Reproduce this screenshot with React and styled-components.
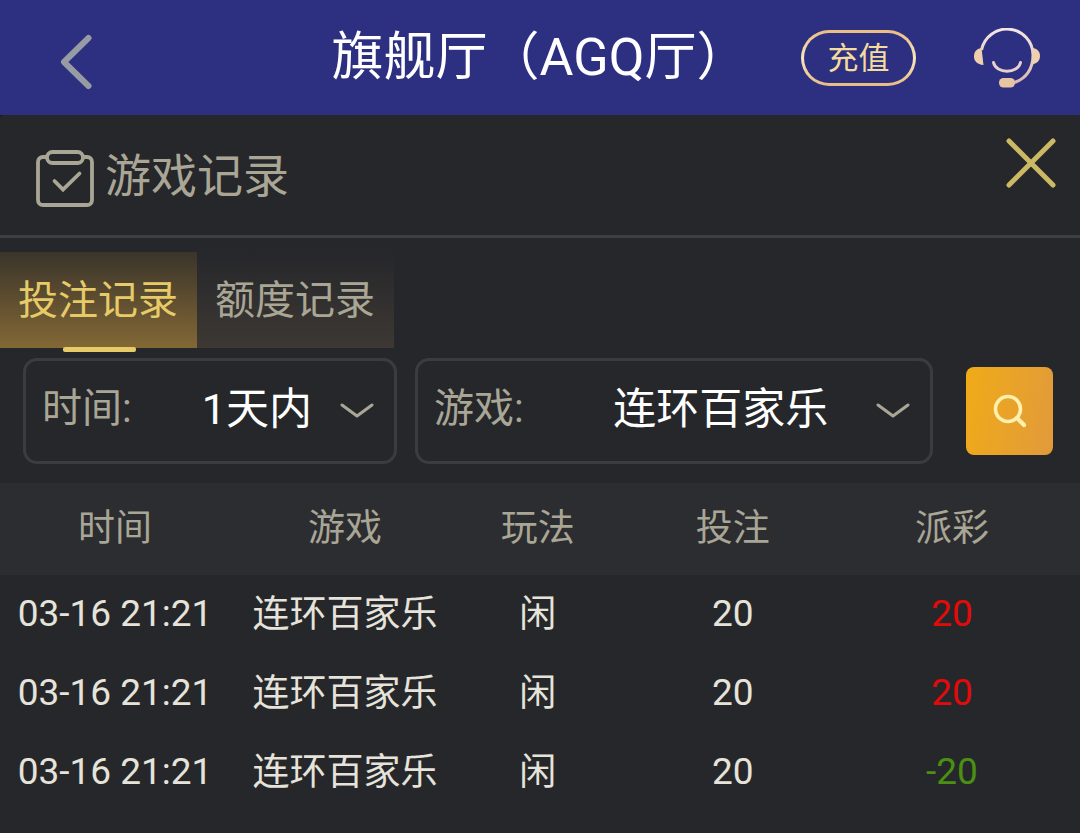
import React, { useState } from 'react';
import styled, { createGlobalStyle, css } from 'styled-components';

const records = [
    { id: 1, time: "03-16 21:21", game: "连环百家乐", play: "闲", bet: 20, payout: 20 },
    { id: 2, time: "03-16 21:21", game: "连环百家乐", play: "闲", bet: 20, payout: 20 },
    { id: 3, time: "03-16 21:21", game: "连环百家乐", play: "闲", bet: 20, payout: -20 },
];

const tabs = [
    { name: "bets", label: "投注记录" },
    { name: "quota", label: "额度记录" },
];

function BackIcon(){
    return(
        <svg width="34" height="56" viewBox="0 0 34 56" fill="none" aria-hidden="true">
            <path d="M28.500 4 L4 28 L28.500 52" stroke="#979ba4" strokeWidth="6" strokeLinecap="round" strokeLinejoin="round" />
        </svg>
    );
}

function ServiceIcon(){
    return(
        <svg width="66" height="60" viewBox="0 0 66 60" fill="none" aria-hidden="true">
            <defs>
                <linearGradient id="headset" x1="0" y1="0" x2="0" y2="1">
                    <stop offset="0" stopColor="#f3e6e2" />
                    <stop offset="1" stopColor="#d9b9b4" />
                </linearGradient>
            </defs>
            <path d="M7.500 22 A26 26 0 0 1 59 27 C59 41 52 51 40 54.500" stroke="url(#headset)" strokeWidth="3" />
            <path d="M7.500 20 C2 21 0 24 0 28.500 C0 33 3 36.500 9.500 37 Z" fill="#eecfae" />
            <path d="M59 20 C64 21 66 24 66 28 C66 32 63.500 35.500 58 36.500 Z" fill="#eecfae" />
            <path d="M19.500 34.500 C22 46 44 46 46.500 34.500" stroke="#e6d0d0" strokeWidth="3" strokeLinecap="round" />
            <rect x="25" y="50" width="16" height="9.500" rx="4.500" fill="#e8c5a2" />
        </svg>
    );
}

function ClipboardIcon(){
    return(
        <svg width="58" height="58" viewBox="0 0 58 58" fill="none" stroke="#a9a695" strokeWidth="3.800" aria-hidden="true">
            <path d="M10 7 H7 C4 7 2 9 2 12 V50 C2 53 4 55 7 55 H51 C54 55 56 53 56 50 V12 C56 9 54 7 51 7 H48" />
            <rect x="11" y="2" width="36" height="11" rx="5.500" />
            <path d="M18.500 31 L27 39.500 L43.500 23.500" strokeLinecap="round" />
        </svg>
    );
}

function CloseIcon(){
    return(
        <svg width="50" height="50" viewBox="0 0 50 50" aria-hidden="true">
            <path d="M3 3 L47 47 M47 3 L3 47" stroke="#ccb964" strokeWidth="5" strokeLinecap="round" />
        </svg>
    );
}

function SearchIcon(){
    return(
        <svg width="34" height="34" viewBox="0 0 34 34" fill="none" stroke="#fff0ae" aria-hidden="true">
            <circle cx="15" cy="15" r="12.500" strokeWidth="3.600" />
            <path d="M24 24 L31 31" strokeWidth="4.200" strokeLinecap="round" />
        </svg>
    );
}

function Filter({ id, label, options }){
    return(
        <FilterBox>
            <FilterLabel htmlFor={id}>{label}:</FilterLabel>
            <FilterSelect id={id}>
                {options.map((option) => <option key={option}>{option}</option>)}
            </FilterSelect>
            <Chevron width="34" height="18" viewBox="0 0 34 18" aria-hidden="true">
                <path d="M2 3 L17 14 L32 3" fill="none" stroke="#aaa797" strokeWidth="3" strokeLinecap="round" strokeLinejoin="round" />
            </Chevron>
        </FilterBox>
    );
}

export default function App(){
    const [activeTab, setActiveTab] = useState("bets");
    const tabClickHandler = (event) => {
        setActiveTab(event.target.name);
    };

    return(
        <Page>
            <GlobalStyle />
            <Header>
                <BackButton aria-label="返回"><BackIcon /></BackButton>
                <Title>旗舰厅（AGQ厅）</Title>
                <HeaderActions>
                    <RechargeButton>充值</RechargeButton>
                    <IconButton aria-label="客服"><ServiceIcon /></IconButton>
                </HeaderActions>
            </Header>
            <Panel>
                <PanelHead>
                    <PanelBrand>
                        <ClipboardIcon />
                        <PanelTitle>游戏记录</PanelTitle>
                    </PanelBrand>
                    <IconButton aria-label="关闭"><CloseIcon /></IconButton>
                </PanelHead>
                <Tabs>
                    {tabs.map((tab) => (
                        <TabButton key={tab.name} name={tab.name} $active={tab.name === activeTab} onClick={tabClickHandler}>{tab.label}</TabButton>
                    ))}
                </Tabs>
                <Filters>
                    <Filter id="time" label="时间" options={["1天内"]} />
                    <Filter id="game" label="游戏" options={["连环百家乐"]} />
                    <SearchButton aria-label="搜索"><SearchIcon /></SearchButton>
                </Filters>
                <Table>
                    <thead>
                        <tr>
                            <HeadCell $width="21.3%">时间</HeadCell>
                            <HeadCell $width="21.3%">游戏</HeadCell>
                            <HeadCell $width="14.4%">玩法</HeadCell>
                            <HeadCell $width="21.7%">投注</HeadCell>
                            <HeadCell>派彩</HeadCell>
                        </tr>
                    </thead>
                    <tbody>
                        {records.map((record) => (
                            <tr key={record.id}>
                                <Cell>{record.time}</Cell>
                                <NameCell>{record.game}</NameCell>
                                <NameCell>{record.play}</NameCell>
                                <Cell>{record.bet}</Cell>
                                <Payout $loss={record.payout < 0}>{record.payout}</Payout>
                            </tr>
                        ))}
                    </tbody>
                </Table>
            </Panel>
        </Page>
    );
}

const GlobalStyle = createGlobalStyle`
    * {
        box-sizing: border-box;
    }
    body {
        margin: 0;
        background-color: #26272b;
    }
    body, button, select {
        font-family: Roboto, "Noto Sans CJK SC", sans-serif;
    }
    button {
        padding: 0;
        border: none;
        background: none;
        cursor: pointer;
    }
    svg {
        display: block;
        flex-shrink: 0;
    }
`;

const Page = styled.div`
    display: flex;
    flex-direction: column;
    min-height: 100vh;
    background-color: #1a1a20;
`;

const Header = styled.header`
    display: grid;
    grid-template-columns: 1fr auto 1fr;
    align-items: center;
    height: 115px;
    padding: 0 40px 0 60px;
    background-color: #2d2f80;
`;

const IconButton = styled.button`
    display: flex;
`;

const BackButton = styled(IconButton)`
    justify-self: start;
    padding-top: 8px;
`;

const Title = styled.h1`
    margin: 0 0 0 -20px;
    font-size: 52px;
    font-weight: 400;
    line-height: 60px;
    white-space: nowrap;
    color: white;
`;

const HeaderActions = styled.div`
    display: flex;
    justify-content: flex-end;
    align-items: center;
    gap: 58px;
`;

const RechargeButton = styled.button`
    width: 115px;
    height: 56px;
    padding-bottom: 4px;
    border: 3px solid transparent;
    border-radius: 28px;
    background:
        linear-gradient(#2d2f80, #2d2f80) padding-box,
        linear-gradient(#eabb82, #f7e6c0 50%, #eabb82) border-box;
    font-size: 31px;
    color: #f5dc9c;
`;

const Panel = styled.main`
    flex: 1;
    border-top-left-radius: 4px;
    background-color: #26272b;
`;

const PanelHead = styled.div`
    display: flex;
    justify-content: space-between;
    align-items: flex-start;
    height: 123px;
    padding: 23px 24px 0 36px;
    border-bottom: 3px solid #3e3f42;
`;

const PanelBrand = styled.div`
    display: flex;
    align-items: center;
    gap: 11px;
    padding-top: 6px;
`;

const PanelTitle = styled.h2`
    margin: 0;
    padding-bottom: 6px;
    font-size: 46px;
    font-weight: 400;
    line-height: 64px;
    color: #a9a695;
`;

const Tabs = styled.div`
    display: flex;
    margin-top: 14px;
`;

const TabButton = styled.button`
    position: relative;
    height: 96px;
    padding: 2px 19px 0 18px;
    font-size: 40px;
    line-height: 48px;
    ${({ $active }) => {
        if($active){
            return css`
                color: #e6cb68;
                background: linear-gradient(#3a342b, #836835);
                &::after {
                    content: "";
                    position: absolute;
                    bottom: -4px;
                    left: 50%;
                    width: 73px;
                    height: 5px;
                    margin-left: -36px;
                    border-radius: 2px;
                    background-color: #e6cb68;
                }
            `;
        } else {
            return css`
                color: #a9a695;
                background: linear-gradient(#26272b, #3d3833);
            `;
        }
    }}
`;

const Filters = styled.div`
    display: grid;
    grid-template-columns: 374fr 518fr 102px;
    align-items: center;
    gap: 18px;
    padding: 10px 27px 19px 23px;
`;

const FilterBox = styled.div`
    position: relative;
    display: flex;
    align-items: center;
    min-width: 0;
    height: 106px;
    padding: 0 12px 4px 16px;
    border: 3px solid #3c3c3f;
    border-radius: 14px;
`;

const FilterLabel = styled.label`
    font-size: 40px;
    line-height: 60px;
    white-space: nowrap;
    color: #a9a695;
`;

const FilterSelect = styled.select`
    flex: 1;
    min-width: 0;
    height: 64px;
    padding: 0;
    border: none;
    appearance: none;
    background: transparent;
    font-size: 43px;
    text-align: center;
    text-align-last: center;
    color: white;
`;

const Chevron = styled.svg`
    position: absolute;
    top: 41px;
    right: 20px;
    pointer-events: none;
`;

const SearchButton = styled.button`
    display: flex;
    justify-content: center;
    align-items: center;
    justify-self: end;
    width: 87px;
    height: 88px;
    border-radius: 8px;
    background: linear-gradient(100deg, #f0ab18, #e19a3b);
`;

const Table = styled.table`
    width: 100%;
    border-collapse: collapse;
    table-layout: fixed;
    font-size: 37px;
`;

const Cell = styled.td`
    height: 79px;
    padding: 0 0 2px;
    text-align: center;
    white-space: nowrap;
    color: #e5e3da;
    &:last-child {
        padding-right: 26px;
    }
`;

/* Chinese glyphs sit lower on the line than the digits */
const NameCell = styled(Cell)`
    padding-bottom: 8px;
`;

const HeadCell = styled.th`
    width: ${({ $width }) => $width || "auto"};
    height: 92px;
    padding: 0 0 8px;
    font-weight: 400;
    color: #a9a695;
    background-color: #2c2d31;
    &:last-child {
        padding-right: 26px;
    }
`;

const Payout = styled(Cell)`
    color: ${({ $loss }) => $loss ? "#4a9013" : "#e20a0a"};
`;
